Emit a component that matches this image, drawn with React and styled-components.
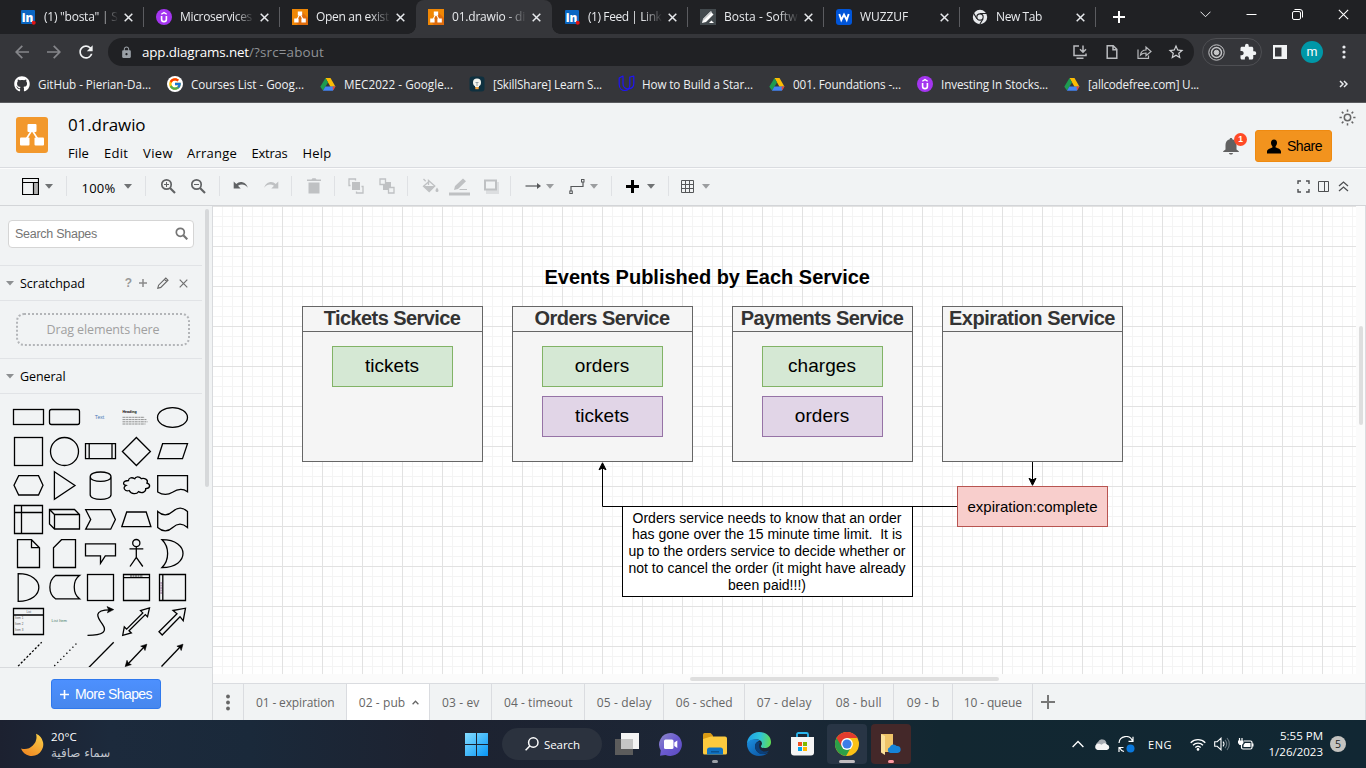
import React, { useLayoutEffect, useRef } from "react";
import styled, { createGlobalStyle, css } from "styled-components";
import { FaGithub } from "react-icons/fa";
import { FcGoogle } from "react-icons/fc";
import { MdExtension, MdLock, MdStarBorder, MdRefresh } from "react-icons/md";

const UI = `"Open Sans", "Noto Sans", "DejaVu Sans", sans-serif`;
const ARIAL = `"Liberation Sans", Arial, sans-serif`;

const Global = createGlobalStyle`
  * { box-sizing: border-box; }
  html, body { margin: 0; overflow: hidden; }
  body { font-family: ${UI}; font-size: 12px; color: #000; }
  svg { display: block; flex: none; }
`;

/* ---------- text that keeps a fixed advance width ---------- */
const FitSpan = styled.span`
  display: inline-block;
  white-space: pre;
  flex: none;
`;
function Fit({ w, children }) {
  const ref = useRef(null);
  useLayoutEffect(() => {
    const el = ref.current;
    el.style.letterSpacing = "0px";
    const natural = el.getBoundingClientRect().width;
    el.style.letterSpacing = `${(w - natural) / el.textContent.length}px`;
  }, [w, children]);
  return <FitSpan ref={ref}>{children}</FitSpan>;
}

const Page = styled.div`
  width: 1366px;
  height: 768px;
  display: flex;
  flex-direction: column;
  overflow: hidden;
`;

/* ---------- browser chrome ---------- */
const TabStrip = styled.div`
  height: 34px;
  background: #202124;
  display: flex;
  padding-left: 8px;
  flex: none;
`;
const BrowserTab = styled.div`
  position: relative;
  width: 136px;
  height: 34px;
  padding-left: 12px;
  display: flex;
  align-items: center;
  color: #e8eaed;
  ${(p) => p.$active && css`
    background: #35363a;
    border-radius: 8px 8px 0 0;
    &::before, &::after {
      content: "";
      position: absolute;
      bottom: 0;
      width: 8px;
      height: 8px;
    }
    &::before { left: -8px; background: radial-gradient(circle at 0 0, #202124 7.5px, #35363a 8px); }
    &::after { right: -8px; background: radial-gradient(circle at 100% 0, #202124 7.5px, #35363a 8px); }
  `}
  ${(p) => p.$divider && css`
    background: linear-gradient(#5b5c60, #5b5c60) right 7px / 1px 20px no-repeat;
  `}
`;
const TabTitle = styled.div`
  width: 74px;
  margin-left: 8px;
  overflow: hidden;
  font-size: 12px;
  line-height: 18px;
  height: 18px;
  flex: none;
  mask-image: linear-gradient(90deg, #000 54px, transparent 75px);
`;
const TabClose = styled.div`
  margin-left: 6px;
  width: 10px;
  flex: none;
`;
const NewTabButton = styled.div`
  width: 46px;
  display: grid;
  place-items: center;
`;
const WindowButtons = styled.div`
  margin-left: auto;
  height: 29px;
  display: grid;
  grid-template-columns: repeat(4, 46px);
  place-items: center;
`;
const AddressRow = styled.div`
  height: 34px;
  background: #35363a;
  display: flex;
  align-items: center;
  padding: 2px 0 0 6px;
  flex: none;
`;
const NavButton = styled.div`
  width: 32px;
  display: grid;
  place-items: center;
  flex: none;
  color: ${(p) => p.$color || "#85868a"};
`;
const Omnibox = styled.div`
  margin-left: 6px;
  width: 1086px;
  height: 28px;
  border-radius: 14px;
  background: #202124;
  display: flex;
  align-items: center;
  padding: 0 2px 0 12px;
  font-size: 13.4px;
  color: #fff;
  flex: none;
`;
const UrlHost = styled.span`margin-left: 9px;`;
const UrlPath = styled.span`color: #8f9296;`;
const OmniActions = styled.div`
  margin-left: auto;
  display: flex;
`;
const ExtensionPill = styled.div`
  margin: 0 2px 0 8px;
  width: 60px;
  height: 28px;
  border: 1px solid #4e4f53;
  border-radius: 14px;
  display: flex;
  align-items: center;
  justify-content: space-between;
  padding: 0 4px 0 5px;
  color: #f1f3f4;
  flex: none;
`;
const Avatar = styled.div`
  width: 22px;
  height: 22px;
  border-radius: 50%;
  background: #0097a7;
  color: #fff;
  font: 12.5px/21px Roboto, sans-serif;
  text-align: center;
`;
const BookmarkBar = styled.div`
  height: 35px;
  background: #35363a;
  border-bottom: 1px solid #5a5b5e;
  display: flex;
  gap: 16px;
  align-items: center;
  padding: 0 18px 3px 14px;
  flex: none;
  color: #eef0f2;
  font-size: 11.7px;
`;
const Bookmark = styled.div`
  display: flex;
  gap: 8px;
  align-items: center;
  height: 18px;
`;
const BookmarkIcon = styled.span`
  width: 16px;
  flex: none;
`;
const BookmarkOverflow = styled.div`
  margin-left: auto;
`;
const GoogleBadge = styled.span`
  width: 16px;
  height: 16px;
  border-radius: 50%;
  background: #fff;
  display: grid;
  place-items: center;
`;

const Close = ({ s = 9, c = "#e8eaed", w = 1.5 }) => (
  <svg width={s} height={s} viewBox="0 0 9 9" stroke={c} strokeWidth={w}><path d="M.7.7l7.6 7.6M8.3.7L.7 8.3" /></svg>
);

const LinkedIn = () => (
  <svg width="16" height="16" viewBox="0 0 16 16">
    <rect x="1" y="1" width="14" height="14" rx="1" fill="#0a66c2" />
    <text x="1.8" y="13" fontFamily="Open Sans" fontWeight="800" fontSize="13" fill="#fff" textLength="11.6" lengthAdjust="spacingAndGlyphs">in</text>
    <circle cx="13.7" cy="13.7" r="2" fill="#e01616" />
  </svg>
);
const Udemy = () => (
  <svg width="16" height="16" viewBox="0 0 16 16">
    <circle cx="8" cy="8" r="8" fill="#a435f0" />
    <path d="M5.6 7v3.200a2.400 2.400 0 0 0 4.800 0V7" fill="none" stroke="#fff" strokeWidth="1.600" />
    <path d="M5.300 5.200L8 3.600l2.700 1.600" fill="none" stroke="#fff" strokeWidth="1.300" />
  </svg>
);
const DrawioIcon = () => (
  <svg width="16" height="16" viewBox="0 0 16 16">
    <rect width="16" height="16" fill="#f08705" />
    <path d="M10 3l6 6v7H6l-3-3z" fill="#df6c0c" />
    <path d="M8 5L4.6 11M8 5l3.400 6" stroke="#fff" strokeWidth="1.100" />
    <path d="M5.800 2.600h4.400v3.800H5.800zM2.200 9.600h4.400v3.800H2.200zM9.400 9.600h4.400v3.800H9.400z" fill="#fff" />
  </svg>
);
const PenIcon = () => (
  <svg width="16" height="16" viewBox="0 0 16 16">
    <rect width="16" height="16" fill="#434a4e" />
    <path d="M2 14l1-4 7.500-7.500 3 3L6 13z" fill="#fff" /><path d="M3 10l8-8 1 1.200L3 12z" fill="#c9cccd" />
    <path d="M9 14l2.400-2.400L14 14z" fill="#fff" />
  </svg>
);
const Wuzzuf = () => (
  <svg width="16" height="16" viewBox="0 0 16 16">
    <rect width="16" height="16" rx="3" fill="#0055d9" />
    <path d="M3.300 5l2 6L8 5.600 10.700 11l2-6" fill="none" stroke="#fff" strokeWidth="1.900" />
  </svg>
);
const ChromeGrey = () => (
  <svg width="16" height="16" viewBox="0 0 16 16">
    <circle cx="8" cy="8" r="7.200" fill="#e8eaed" />
    <circle cx="8" cy="8" r="3.700" fill="#202124" /><circle cx="8" cy="8" r="2.600" fill="#e8eaed" />
    <path d="M8 4.500h7M4.900 9.700L1.400 3.900M11.100 9.700L7.800 15.200" stroke="#202124" strokeWidth="1.100" />
  </svg>
);
const Drive = () => (
  <svg width="16" height="16" viewBox="0 0 16 16">
    <path d="M5.500 2h5L15.500 10.700h-5z" fill="#fbbc04" />
    <path d="M5.500 2L8 6.500 3 14.500.3 10.700z" fill="#1e9b50" />
    <path d="M5.400 10.600H15.300L12.800 14.700H2.900z" fill="#4385f5" />
    <path d="M12.600 10.600h2.900l-2.500 4z" fill="#ea4335" />
  </svg>
);
const Skill = () => (
  <svg width="16" height="16" viewBox="0 0 16 16">
    <rect x=".5" y=".5" width="15" height="15" rx="3" fill="#0f303f" />
    <circle cx="8" cy="6.500" r="4" fill="#f4f4ee" /><path d="M6 9h4v2H6z" fill="#f4f4ee" />
    <path d="M6.300 11h3.400v2.200H6.300z" fill="#f5a742" />
    <path d="M6.500 6.500h3M8 6.500V10" stroke="#7e8d94" strokeWidth=".8" />
  </svg>
);
const Udacity = () => (
  <svg width="17" height="17" viewBox="0 0 17 17" fill="none" stroke="#2014f5" strokeWidth="1.200" strokeLinejoin="round">
    <path d="M5 1L1.200 3v6.500c0 4 2.800 6 5.500 6 1.600 0 3-.6 3.800-1.700-3 .3-5.500-1.300-5.500-4.800z" />
    <path d="M15.800 1.200L11.800 2v8.300c0 1.500-.4 2.600-1.300 3.500 3-.2 5.300-2 5.300-5.300z" />
  </svg>
);

const tabs = [
  { icon: <LinkedIn />, t: '(1) "bosta" | S', w: 73.5, divider: true },
  { icon: <Udemy />, t: "Microservices", w: 72, divider: true },
  { icon: <DrawioIcon />, t: "Open an exist", w: 73 },
  { icon: <DrawioIcon />, t: "01.drawio - di", w: 73, active: true },
  { icon: <LinkedIn />, t: "(1) Feed | Link", w: 73.5, divider: true },
  { icon: <PenIcon />, t: "Bosta - Softw", w: 73.5, divider: true },
  { icon: <Wuzzuf />, t: "WUZZUF", w: 48, divider: true },
  { icon: <ChromeGrey />, t: "New Tab", w: 46, divider: true },
];
const bookmarks = [
  [<FaGithub size={16} color="#fff" />, "GitHub - Pierian-Da...", 113],
  [<GoogleBadge><FcGoogle size={14} /></GoogleBadge>, "Courses List - Goog...", 113],
  [<Drive />, "MEC2022 - Google...", 109],
  [<Skill />, "[SkillShare] Learn S...", 109],
  [<Udacity />, "How to Build a Star...", 111],
  [<Drive />, "001. Foundations -...", 108],
  [<Udemy />, "Investing In Stocks...", 107],
  [<Drive />, "[allcodefree.com] U...", 111],
];

const OI = ({ children }) => (
  <svg width="16" height="16" viewBox="0 0 16 16" fill="none" stroke="#b9bbbe" strokeWidth="1.500">{children}</svg>
);

function Browser() {
  return (
    <>
      <TabStrip>
        {tabs.map((t) => (
          <BrowserTab key={t.t} $active={t.active} $divider={t.divider}>
            {t.icon}
            <TabTitle><Fit w={t.w}>{t.t}</Fit></TabTitle>
            <TabClose><Close /></TabClose>
          </BrowserTab>
        ))}
        <NewTabButton>
          <svg width="12" height="12" viewBox="0 0 12 12" stroke="#fff" strokeWidth="2"><path d="M6 0v12M0 6h12" /></svg>
        </NewTabButton>
        <WindowButtons>
          <svg width="11" height="7" viewBox="0 0 11 7" fill="none" stroke="#e8eaed"><path d="M.5.7l5 5 5-5" /></svg>
          <svg width="11" height="3" viewBox="0 0 11 3" stroke="#fff"><path d="M.5 1.500h10" /></svg>
          <svg width="11" height="11" viewBox="0 0 11 11" fill="none" stroke="#fff"><rect x=".5" y="2.500" width="8" height="8" rx="1.500" /><path d="M2.500.5h5.500a2.500 2.500 0 0 1 2.500 2.500v5.500" /></svg>
          <Close s={11} c="#fff" w={0.9} />
        </WindowButtons>
      </TabStrip>
      <AddressRow>
        <NavButton><svg width="14" height="14" viewBox="0 0 14 14" fill="none" stroke="currentColor" strokeWidth="1.700"><path d="M14 7H1.500M7.300.8L1.200 7l6.100 6.200" /></svg></NavButton>
        <NavButton><svg width="14" height="14" viewBox="0 0 14 14" fill="none" stroke="currentColor" strokeWidth="1.700"><path d="M0 7h12.500M6.700.8L12.800 7l-6.100 6.200" /></svg></NavButton>
        <NavButton $color="#f1f3f4"><MdRefresh size={20} /></NavButton>
        <Omnibox>
          <MdLock size={13} color="#9aa0a6" />
          <UrlHost><Fit w={107}>app.diagrams.net</Fit></UrlHost>
          <UrlPath><Fit w={75}>/?src=about</Fit></UrlPath>
          <OmniActions>
            <NavButton><OI><path d="M7 2H2v9.500h12V9.500M4.500 14.200h7M11 1.500v6M8 5.300l3 3 3-3" /></OI></NavButton>
            <NavButton><OI><path d="M3.200 1.700h6l3.600 3.600v9H3.200zM9 2v3.800h3.500" /></OI></NavButton>
            <NavButton><OI><path d="M2 5.500v8.800h10.500V11.500M4.500 11c.5-3.500 2.500-5 5.500-5V3l5 4.500-5 4.200V9c-2.500 0-4 .5-5.500 2z" strokeWidth="1.200" /></OI></NavButton>
            <NavButton $color="#d0d2d5"><MdStarBorder size={18} /></NavButton>
          </OmniActions>
        </Omnibox>
        <ExtensionPill>
          <svg width="17" height="17" viewBox="0 0 17 17" fill="none" stroke="#c6c7c9"><circle cx="8.500" cy="8.500" r="7.700" /><circle cx="8.500" cy="8.500" r="5" strokeWidth="1.400" /><circle cx="8.500" cy="8.500" r="2.300" fill="#c6c7c9" /></svg>
          <MdExtension size={18} />
        </ExtensionPill>
        <NavButton><svg width="14" height="14" viewBox="0 0 14 14"><path fillRule="evenodd" fill="#f1f3f4" d="M0 0h14v14H0zM2 2.500v9h6.500v-9z" /></svg></NavButton>
        <NavButton><Avatar>m</Avatar></NavButton>
        <NavButton><svg width="4" height="14" viewBox="0 0 4 14" fill="#e8eaed"><circle cx="2" cy="2" r="1.600" /><circle cx="2" cy="7" r="1.600" /><circle cx="2" cy="12" r="1.600" /></svg></NavButton>
      </AddressRow>
      <BookmarkBar>
        {bookmarks.map(([icon, t, w]) => (
          <Bookmark key={t}><BookmarkIcon>{icon}</BookmarkIcon><Fit w={w}>{t}</Fit></Bookmark>
        ))}
        <BookmarkOverflow><svg width="9" height="8" viewBox="0 0 9 8" fill="none" stroke="#e8eaed" strokeWidth="1.500"><path d="M1 1l3 3-3 3M5 1l3 3-3 3" /></svg></BookmarkOverflow>
      </BookmarkBar>
    </>
  );
}

/* ---------- editor header ---------- */
const Header = styled.div`
  height: 65px;
  background: #f1f3f4;
  border-bottom: 1px solid #dadce0;
  display: flex;
  padding-left: 16px;
  flex: none;
`;
const Logo = styled.div`
  width: 32px;
  height: 36px;
  margin-top: 14px;
  border-radius: 3px;
  background: #f2982c;
  display: grid;
  place-items: center;
`;
const TitleBlock = styled.div`
  margin-left: 20px;
`;
const FileName = styled.div`
  margin-top: 9px;
  font-size: 17px;
  line-height: 26px;
  height: 26px;
`;
const MenuBar = styled.div`
  display: flex;
  margin-top: 5px;
  font-size: 13px;
  line-height: 20px;
`;
const MenuItem = styled.div`
  margin-right: ${(p) => p.$gap}px;
`;
const HeaderActions = styled.div`
  margin-left: auto;
  display: flex;
  width: 143px;
`;
const Bell = styled.div`
  position: relative;
  width: 32px;
  padding: 34px 0 0 0;
`;
const BellCount = styled.span`
  position: absolute;
  left: 11px;
  top: 30px;
  width: 13px;
  height: 13px;
  border-radius: 50%;
  background: #ff4a26;
  color: #fff;
  font: bold 8.5px/13px ${ARIAL};
  text-align: center;
`;
const ShareButton = styled.div`
  margin-top: 27px;
  width: 77px;
  height: 32px;
  border: 1px solid #ef8a10;
  border-radius: 3px;
  background: #f2931e;
  display: flex;
  align-items: center;
  gap: 6px;
  padding-left: 11px;
  font: 14px ${ARIAL};
`;
const SunSlot = styled.div`
  padding: 6px 0 0 7px;
`;

const menus = [["File", 21, 15], ["Edit", 24, 15], ["View", 30, 14], ["Arrange", 50, 14.5], ["Extras", 36, 15], ["Help", 29, 0]];

function EditorHeader() {
  return (
    <Header>
      <Logo>
        <svg width="24" height="22" viewBox="0 0 24 22" fill="#fff"><path d="M12 6L5 17M12 6l7 11" stroke="#fff" strokeWidth="1.600" /><rect x="7.500" y="0" width="9" height="8" rx="1" /><rect x="0" y="13.500" width="9.500" height="8" rx="1" /><rect x="14.500" y="13.500" width="9.500" height="8" rx="1" /></svg>
      </Logo>
      <TitleBlock>
        <FileName><Fit w={77.5}>01.drawio</Fit></FileName>
        <MenuBar>{menus.map(([m, w, g]) => <MenuItem key={m} $gap={g}><Fit w={w}>{m}</Fit></MenuItem>)}</MenuBar>
      </TitleBlock>
      <HeaderActions>
        <Bell>
          <svg width="17" height="18" viewBox="0 0 17 18" fill="#616161"><path d="M8 1c.9 0 1.300.5 1.300 1.300 2.700.7 4.200 2.700 4.200 5.700v4.500l2.300 1.700v.8H.2v-.8l2.300-1.700V8c0-3 1.500-5 4.200-5.700C6.700 1.500 7.100 1 8 1zM6 16h4c-.2 1-1 1.600-2 1.600S6.200 17 6 16z" /></svg>
          <BellCount>1</BellCount>
        </Bell>
        <ShareButton>
          <svg width="14" height="15" viewBox="0 0 14 15"><path d="M7 .5c2 0 3 1.400 3 3.200 0 1.500-.6 2.800-1.400 3.500v1.300c2.800.9 5.400 1.700 5.400 4.300V14.500H0v-1.700c0-2.600 2.600-3.400 5.400-4.300V7.200C4.600 6.500 4 5.200 4 3.700 4 1.900 5 .5 7 .5z" /></svg>
          <Fit w={35}>Share</Fit>
        </ShareButton>
        <SunSlot>
          <svg width="17" height="17" viewBox="0 0 17 17" fill="none" stroke="#666" strokeWidth="1.500"><circle cx="8.500" cy="8.500" r="3.200" /><path d="M8.500.5v2.300M8.500 14.200v2.300M.5 8.500h2.300M14.200 8.500h2.300M2.800 2.800l1.600 1.600M12.600 12.600l1.600 1.600M2.800 14.200l1.600-1.600M12.600 4.400l1.600-1.600" /></svg>
        </SunSlot>
      </HeaderActions>
    </Header>
  );
}

/* ---------- editor toolbar ---------- */
const ToolRow = styled.div`
  height: 38px;
  background: #f1f3f4;
  border-top: 1px solid #fcfcfc;
  border-bottom: 1px solid #d3d5d8;
  display: flex;
  align-items: center;
  padding: 0 0 2px 18px;
  flex: none;
`;
const Slot = styled.div`
  width: ${(p) => p.$w}px;
  margin-left: ${(p) => p.$ml || 0}px;
  display: flex;
  justify-content: center;
  flex: none;
`;
const SepLine = styled.div`width: 1px; height: 20px; background: #dfe1e4;`;
const Zoom = styled.div`
  font-size: 13px;
  line-height: 18px;
  padding-top: 3px;
`;
const RightTools = styled.div`
  margin-left: auto;
  padding-right: 13px;
  display: flex;
  align-items: center;
`;
const Sep = ({ w }) => <Slot $w={w}><SepLine /></Slot>;
const Caret = ({ w, c = "#707274" }) => <Slot $w={w}><svg width="8" height="5" viewBox="0 0 8 5"><path d="M0 0h8L4 4.700z" fill={c} /></svg></Slot>;
const T = ({ w, ml, children, sw = 16, sh = 16, ...r }) => (
  <Slot $w={w} $ml={ml}><svg width={sw} height={sh} viewBox={`0 0 ${sw} ${sh}`} fill="none" {...r}>{children}</svg></Slot>
);

function ToolBar() {
  const light = "#bfc1c3";
  return (
    <ToolRow>
      <T w={25} sw={17} sh={17} stroke="#000"><rect x="11" y="4" width="5" height="12" fill="#b3b3b3" stroke="none" /><path d="M.5.5h16v16H.5zM.5 4.500h16M11.500 4.500v12" strokeWidth="1.200" /></T>
      <Caret w={12} /><Sep w={23} />
      <Slot $w={41}><Zoom><Fit w={34}>100%</Fit></Zoom></Slot><Caret w={18} /><Sep w={17} />
      <T w={28} stroke="#606264" strokeWidth="1.700"><circle cx="6.500" cy="6.500" r="4.700" /><path d="M10 10l5 5" strokeWidth="2.100" /><path d="M6.500 4v5M4 6.500h5" strokeWidth="1" /></T>
      <T w={32} stroke="#606264" strokeWidth="1.700"><circle cx="6.500" cy="6.500" r="4.700" /><path d="M10 10l5 5" strokeWidth="2.100" /><path d="M4 6.500h5" strokeWidth="1" /></T>
      <Sep w={10} />
      <T w={34} fill="#606264"><path d="M.7 3.500v7h7L5 7.800C8.200 5.500 12 6 14.800 9.700c-1.600-5.600-8-7.600-11.500-3.600z" /></T>
      <T w={26} fill={light}><path d="M15.300 3.500v7h-7L11 7.800C7.800 5.500 4 6 1.200 9.700 2.800 4.100 9.200 2.100 12.700 6.100z" /></T>
      <Sep w={14} />
      <T w={32} fill={light}><path d="M1 1.500h4.500l1-1.200h3l1 1.200H15V3H1zM2.500 4.500h11v11h-11z" /></T>
      <Sep w={9} />
      <T w={34} stroke={light} strokeWidth="1.300"><rect x="4" y="4" width="8" height="8" fill={light} stroke="none" /><path d="M2.500 7.500H1V1h6.500v1.500M13.500 8.500H15V15H8.500v-1.500" /></T>
      <T w={28} stroke={light} strokeWidth="1.300"><path d="M4 4h8v8H4z" fill={light} stroke="none" /><path d="M1 1h5.500v5.500H1zM9.500 9.500H15V15H9.500z" fill="#f1f3f4" /></T>
      <Sep w={12} />
      <Slot $w={34}><svg width="17" height="17" viewBox="0 0 17 17" fill={light}><path d="M1.500 1l2.200 2.200M6.500 7V2.500L12.800 8l-5.600 5.600-5.700-5.300L7 3.500" stroke={light} fill="none" strokeWidth="1.300" /><path d="M1.500 8h11l-5.300 5.500zM15 9.500c1 1.500 1.500 2.200 1.500 3a1.500 1.500 0 0 1-3 0c0-.8.5-1.500 1.500-3z" /></svg></Slot>
      <T w={25} sw={21} sh={19} fill={light}><path d="M5 13l1-4L14 1.500l3 2.700L9 12zM0 15.500h21V18.500H0zM11 12h7v1H10z" /></T>
      <T ml={8} w={21} stroke={light}><path d="M3 4h13v12H3z" fill="#dcdee0" stroke="none" /><rect x="2" y="2.500" width="11" height="9" fill="#f1f3f4" strokeWidth="2" /></T>
      <Sep w={19} />
      <T w={25} stroke="#555759"><path d="M.5 8h13" strokeWidth="1.200" /><path d="M12 5l4 3-4 3z" fill="#555759" stroke="none" /></T>
      <Caret w={10} c="#9b9d9f" />
      <T ml={9} w={25} stroke="#555759"><path d="M2 13V8.500h12V4" strokeWidth="1.200" /><rect x="12.500" y="1.500" width="2.500" height="2.500" /><rect x=".8" y="13" width="2.500" height="2.500" /></T>
      <Caret w={10} c="#9b9d9f" /><Sep w={25} />
      <T w={17} sw={13} sh={13} stroke="#000" strokeWidth="3"><path d="M6.500 0v13M0 6.500h13" /></T>
      <Caret w={20} /><Sep w={15} />
      <T w={23} sw={13} sh={13} stroke="#555759"><path d="M.5.5h12v12H.5zM.5 4.500h12M.5 8.500h12M4.500.5v12M8.500.5v12" /></T>
      <Caret w={14} c="#9b9d9f" />
      <RightTools>
        <T w={20} sw={13} sh={13} stroke="#4d4f51" strokeWidth="1.400"><path d="M1 4V1h3M9 1h3v3M12 9v3H9M4 12H1V9" /></T>
        <T w={20} sw={11} sh={11} stroke="#4d4f51"><path d="M.5.5h10v10H.5zM6.500.5v10" /></T>
        <T w={20} sw={11} sh={11} stroke="#4d4f51" strokeWidth="1.300"><path d="M1 5l4.500-4L10 5M1 10l4.500-4L10 10" /></T>
      </RightTools>
    </ToolRow>
  );
}

/* ---------- sidebar ---------- */
const Workspace = styled.div`
  display: flex;
  height: 514px;
  flex: none;
`;
const Sidebar = styled.div`
  width: 213px;
  background: #f1f3f4;
  border-right: 1px solid #d8dadd;
  display: flex;
  flex-direction: column;
`;
const SideScroll = styled.div`
  height: 461px;
  overflow: hidden;
  display: flex;
`;
const SideContent = styled.div`
  width: 202px;
`;
const ScrollThumb = styled.div`
  width: 4px;
  height: 278px;
  margin: 3px 0 0 3px;
  border-radius: 2px;
  background: #d6d8da;
`;
const SearchBox = styled.div`
  margin: 14px 8px 17px;
  width: 186px;
  height: 28px;
  border: 1px solid #d5d5d5;
  border-radius: 4px;
  background: #fff;
  display: flex;
  align-items: center;
  justify-content: space-between;
  padding: 0 5px 1px 6px;
  font: 12.5px ${ARIAL};
  color: #757575;
`;
const Section = styled.div`
  height: ${(p) => p.$h}px;
  border-top: 1px solid #e1e3e6;
  display: flex;
  align-items: center;
  padding-left: 6px;
  font-size: 12.5px;
  font-weight: 500;
`;
const SectionLabel = styled.div`margin-left: 6px; flex: 1; display: flex;`;
const SectionTools = styled.div`
  display: flex;
  gap: 10px;
  align-items: center;
  padding-right: 14px;
  color: #999;
  font: bold 12px ${ARIAL};
`;
const HelpMark = styled.span`margin-right: -3px;`;
const DropArea = styled.div`
  height: 58px;
  border-top: 1px solid #e1e3e6;
  padding: 12px 0 0 16px;
`;
const DropHint = styled.div`
  width: 174px;
  height: 33px;
  border: 2px dotted #b3b5b8;
  border-radius: 8px;
  display: grid;
  place-items: center;
  color: #a0a0a0;
  font-size: 12.5px;
`;
const ShapeGrid = styled.div`
  border-top: 1px solid #e1e3e6;
  padding: 6px 0 0 10px;
  display: grid;
  grid-template-columns: repeat(5, 36px);
  grid-auto-rows: 34px;
`;
const SideFooter = styled.div`
  height: 53px;
  border-top: 1px solid #d8dadd;
  padding: 11px 0 0 51px;
`;
const MoreButton = styled.div`
  width: 110px;
  height: 30px;
  border: 1px solid #3079ed;
  border-radius: 3px;
  background: linear-gradient(#4d90fe, #4787ed);
  color: #fff;
  font: 14px ${ARIAL};
  display: flex;
  align-items: center;
  gap: 6px;
  padding-left: 8px;
`;

const Tiny = ({ x, y, s = 3, c = "#555", b, children }) => (
  <text x={x} y={y} fontSize={s} fill={c} fontWeight={b ? 700 : 400} fontFamily="Liberation Sans">{children}</text>
);
const F = { fill: "#000", strokeWidth: 0.6 };
const shapes = [
  <rect x="3.500" y="9.500" width="30" height="15" />,
  <rect x="3.500" y="9.500" width="30" height="15" rx="2" />,
  <g stroke="none"><Tiny x={12.8} y={18.900} s={5.2} c="#4a78b5">Text</Tiny></g>,
  <g stroke="none"><Tiny x={4.500} y={13.200} s={3.600} c="#000" b>Heading</Tiny><path d="M4.500 17.300h22M4.500 19.600h24M4.500 21.800h25M4.500 24h23" stroke="#777" strokeWidth=".8" strokeDasharray="3 .6 2 .5" /></g>,
  <ellipse cx="18.500" cy="17.500" rx="15" ry="9.800" />,
  <rect x="4.500" y="3.500" width="28" height="28" />,
  <circle cx="18.500" cy="17.500" r="14" />,
  <path d="M3.500 9.700h30v15h-30zM7.200 9.700v15M30 9.700v15" />,
  <path d="M18.400 3.500l14 14-14 14-14-14z" />,
  <path d="M8.600 9.700h24.900l-5 15H3.800z" />,
  <path d="M8.700 7.700h19.800L33 17.300 28.500 27H8.700L4 17.300z" />,
  <path d="M8.400 3.700L29 17.500 8.400 31.300z" />,
  <path d="M8.200 8.700v18c0 6.300 20.800 6.300 20.800 0v-18c0-6.300-20.800-6.300-20.800 0 0 6.300 20.800 6.300 20.800 0" />,
  <path d="M10.500 12.500C5 12.500 4 16.500 8 17.500c-4 2-1 6.300 3.200 5 2 4 7.600 4 9.200 1.200 4 2 7.800 0 7.300-3 5-.5 5-4.500 1.200-5.500 2-4-3-5.500-5.600-4.500-2-2.800-5.800-2.300-6.600 0-3.400-2-6.200-.5-6.200 1.800z" />,
  <path d="M3.700 7.700h29.800v16c-5-3.500-10-2.700-15 .6-5 3-10 2.700-14.800-.3z" />,
  <path d="M4.500 3.500h28v28h-28zM11.500 3.500v28M4.500 10.500h28" />,
  <path d="M3.500 7.500h25l5 5V27H8.500l-5-5zM3.500 7.500l5 5h25M8.500 12.500V27" />,
  <path d="M3.700 7.700h25l4.700 9.800-4.700 9.700h-25l5-9.700z" />,
  <path d="M8.700 10h19.500l4.700 14.700H3.800z" />,
  <path d="M3.700 9.500c5 4.500 10 4.500 15 0s10-4.500 14.800 0v16c-5-4.500-10-4.500-14.800 0s-10 4.500-15 0z" />,
  <path d="M7.500 3.700h14l8 8v19.800h-22zM21.500 3.700v8h8" />,
  <path d="M15.500 3.700h14v27.800h-22V11.700z" />,
  <path d="M3.500 7.800h30v12H23.300l-4.800 7.500v-7.500h-15z" />,
  <path d="M11.500 12.800h13.800M18.300 10.700v10.600M18.300 21.300L12 30.500M18.300 21.300l6.500 9.200M18.300 3.500a3.600 3.600 0 1 1 0 7.200 3.600 3.600 0 0 1 0-7.200z" />,
  <path d="M8 3.700c28 0 28 27.800 0 27.800 7.500-7 7.500-20.800 0-27.800z" />,
  <path d="M8.200 3.700c27.500 0 27.500 27.600 0 27.600z" />,
  <path d="M9.500 5.500h24c-7 5-7 18 0 23.300h-24c-7.500-5-7.500-18 0-23.300z" />,
  <rect x="5.500" y="4.500" width="26" height="26" />,
  <g><path d="M5.500 4.500h26v26h-26zM5.500 7.700h26" /><path d="M12 6h13" strokeWidth=".8" strokeDasharray="2 .5" /></g>,
  <g><path d="M5.500 4.500h26v26h-26zM8.800 4.500v26" /><path d="M7.100 12v12" stroke="#747" strokeWidth=".8" strokeDasharray="2 .5" /></g>,
  <g><path d="M3.500 4.500h30v26h-30zM3.500 11h30" /><g stroke="none"><Tiny x={16.500} y={8.500} c="#456">List</Tiny><Tiny x={5} y={15}>Item 1</Tiny><Tiny x={5} y={21}>Item 2</Tiny><Tiny x={5} y={27}>Item 3</Tiny></g></g>,
  <g stroke="none"><Tiny x={5.500} y={18} s={4.1} c="#4b7a68">List Item</Tiny></g>,
  <g><path d="M5.500 31.300c16 0 20-4 15-11C15 13 11 6 28 5.800" /><path d="M25 2.600l6.700 3-6.300 3.200 1.300-3z" {...F} /></g>,
  <path d="M4.700 31.300l1.600-8.500 2.300 2.300L24.800 8.900l-2.300-2.300 9-2.600-2 8.800-2.200-2.200L11 26.800l2.300 2.200z" />,
  <path d="M5 27.800L23 9.800l-4-3.300 12.500-2.300-2.300 12.500-3.200-4L8.200 31z" />,
  <path d="M5.300 31L31.700 4.200" strokeDasharray="2.200 1.800" />,
  <path d="M5.300 31L31 5" strokeDasharray="1.300 3" />,
  <path d="M5.300 31L31.700 4.200" />,
  <g><path d="M9 27L27 8" /><path d="M28.800 6.200l-1.800 6.300-1.300-3-3-1.300zM7.200 28.600l1.800-6.300 1.300 3 3 1.300z" {...F} /></g>,
  <g><path d="M7.500 28.500L27 8" /><path d="M29 6.200l-1.800 6.300-1.300-3-3-1.300z" {...F} /></g>,
];

const Fold = () => <svg width="8" height="5" viewBox="0 0 8 5"><path d="M0 0h8L4 4.500z" fill="#8d8f91" /></svg>;

function ShapePanel() {
  return (
    <Sidebar>
      <SideScroll>
        <SideContent>
          <SearchBox>
            <Fit w={82}>Search Shapes</Fit>
            <svg width="13" height="13" viewBox="0 0 13 13" fill="none" stroke="#757575"><circle cx="5.300" cy="5.300" r="4" strokeWidth="1.700" /><path d="M8.300 8.300l4 4" strokeWidth="2.200" /></svg>
          </SearchBox>
          <Section $h={35}>
            <Fold /><SectionLabel><Fit w={65}>Scratchpad</Fit></SectionLabel>
            <SectionTools>
              <HelpMark>?</HelpMark>
              <svg width="8" height="8" viewBox="0 0 8 8" stroke="#8a8a8a" strokeWidth="1.500"><path d="M4 0v8M0 4h8" /></svg>
              <svg width="12" height="12" viewBox="0 0 12 12" fill="none" stroke="#666" strokeWidth="1.100"><path d="M.8 11.200l.8-3L8.800 1l2.200 2.200-7.200 7.200zM7.500 2.300l2.200 2.200" /></svg>
              <Close s={9} c="#707070" w={1.2} />
            </SectionTools>
          </Section>
          <DropArea><DropHint><Fit w={113}>Drag elements here</Fit></DropHint></DropArea>
          <Section $h={35}><Fold /><SectionLabel><Fit w={45.5}>General</Fit></SectionLabel></Section>
          <ShapeGrid>
            {shapes.map((s, i) => <svg key={i} width="36" height="34" viewBox="0 0 36 34" fill="none" stroke="#000" strokeWidth="1.300">{s}</svg>)}
          </ShapeGrid>
        </SideContent>
        <ScrollThumb />
      </SideScroll>
      <SideFooter>
        <MoreButton>
          <svg width="9" height="9" viewBox="0 0 9 9" stroke="#fff" strokeWidth="1.600"><path d="M4.500 0v9M0 4.500h9" /></svg>
          <Fit w={77}>More Shapes</Fit>
        </MoreButton>
      </SideFooter>
    </Sidebar>
  );
}

/* ---------- canvas ---------- */
const Main = styled.div`
  width: 1153px;
  display: flex;
  flex-direction: column;
`;
const CanvasFrame = styled.div`
  position: relative;
  height: 477px;
  background: #fbfbfb;
  border-right: 1px solid #dadce0;
  overflow: hidden;
`;
const grid = (c, s, x) => `linear-gradient(90deg, ${c} 1px, transparent 1px) ${x}px 0 / ${s}px ${s}px, linear-gradient(${c} 1px, transparent 1px) 0 0 / ${s}px ${s}px`;
const Canvas = styled.div`
  position: relative;
  width: 1143px;
  height: 468px;
  background: ${grid("#e2e2e2", 40, 29)}, ${grid("#f4f4f4", 10, 9)}, #fff;
  font-family: ${ARIAL};
`;
const Node = styled.div`
  position: absolute;
  left: ${(p) => p.$x - 213}px;
  top: ${(p) => p.$y - 206}px;
  width: ${(p) => p.$w}px;
  height: ${(p) => p.$h}px;
  border: 1px solid ${(p) => p.$stroke};
  background: ${(p) => p.$fill};
  font-size: ${(p) => p.$size || 19}px;
  display: flex;
  align-items: center;
  justify-content: center;
`;
const Topic = styled(Node)`
  padding: 0 1px 2px 0;
`;
const Swimlane = styled(Node)`
  align-items: flex-start;
`;
const LaneTitle = styled.div`
  width: 100%;
  height: 25px;
  padding-right: 1px;
  border-bottom: 1px solid #666;
  color: #333;
  font: bold 20px/23px ${ARIAL};
  text-align: center;
`;
const DiagramTitle = styled.div`
  position: absolute;
  left: 331.5px;
  top: 59px;
  font-weight: bold;
  font-size: 20px;
  line-height: 24px;
`;
const Note = styled(Node)`
  flex-direction: column;
  line-height: 16.8px;
  padding-right: 1px;
`;
const Edges = styled.svg`
  position: absolute;
  inset: 0;
`;
const VThumb = styled.div`
  position: absolute;
  right: 2px;
  top: 120px;
  width: 4px;
  height: 99px;
  border-radius: 2px;
  background: #dedede;
`;
const HThumb = styled.div`
  position: absolute;
  left: 477px;
  bottom: 2px;
  width: 309px;
  height: 4px;
  border-radius: 2px;
  background: #dedede;
`;
const lanes = [[302, "Tickets Service", 136.5], [512, "Orders Service", 135], [732, "Payments Service", 162.5], [942, "Expiration Service", 166]];
const green = { $fill: "#d5e8d4", $stroke: "#82b366", $y: 346 };
const purple = { $fill: "#e1d5e7", $stroke: "#9673a6", $y: 396 };
const topics = [
  [332, green, "tickets", 54], [542, green, "orders", 54.5], [542, purple, "tickets", 54],
  [762, green, "charges", 68], [762, purple, "orders", 54.5],
];
const noteLines = [["Orders service needs to know that an order", 269], ["has gone over the 15 minute time limit.  It is", 270], ["up to the orders service to decide whether or", 277], ["not to cancel the order (it might have already", 277], ["been paid!!!)", 78]];

/* ---------- page tabs ---------- */
const PageTabs = styled.div`
  height: 37px;
  background: #f1f3f4;
  border-top: 1px solid #dadce0;
  border-right: 1px solid #dadce0;
  display: flex;
  color: #666;
  font-size: 12px;
`;
const PageMenu = styled.div`
  width: 31px;
  border-right: 1px solid #dadce0;
  display: grid;
  place-items: center;
`;
const PageTab = styled.div`
  width: ${(p) => p.$w}px;
  border-right: 1px solid #dadce0;
  background: ${(p) => (p.$active ? "#fff" : "transparent")};
  display: flex;
  align-items: center;
  justify-content: center;
  gap: 7px;
  padding-left: ${(p) => (p.$active ? 2 : 0.5)}px;
  flex: none;
`;
const AddPage = styled.div`
  width: 30px;
  display: grid;
  place-items: center;
`;
const pages = [["01 - expiration", 103, 78.5], ["02 - pub", 83, 46.5, true], ["03 - ev", 62, 37.5], ["04 - timeout", 93, 68.5], ["05 - delay", 79, 55], ["06 - sched", 81, 57], ["07 - delay", 79, 55], ["08 - bull", 70, 46], ["09 - b", 59, 33], ["10 - queue", 80, 58]];

function Editor() {
  return (
    <Main>
      <CanvasFrame>
        <Canvas>
          <DiagramTitle><Fit w={325.5}>Events Published by Each Service</Fit></DiagramTitle>
          {lanes.map(([x, t, w]) => (
            <Swimlane key={t} $x={x} $y={306} $w={181} $h={156} $fill="#f5f5f5" $stroke="#666">
              <LaneTitle><Fit w={w}>{t}</Fit></LaneTitle>
            </Swimlane>
          ))}
          {topics.map(([x, look, t, w], i) => (
            <Topic key={i} $x={x} $w={121} $h={41} {...look}><Fit w={w}>{t}</Fit></Topic>
          ))}
          <Node $x={957} $y={486} $w={151} $h={41} $fill="#f8cecc" $stroke="#b85450" $size={15}><Fit w={130}>expiration:complete</Fit></Node>
          <Note $x={622} $y={506} $w={291} $h={91} $fill="#fff" $stroke="#000" $size={14}>
            {noteLines.map(([t, w]) => <Fit key={t} w={w}>{t}</Fit>)}
          </Note>
          <Edges width="1143" height="468" viewBox="213 206 1143 468" fill="none" stroke="#000">
            <path d="M957 506.500H602.500V466M1032.500 462v20" />
            <path d="M602.500 462.800l3.500 7-3.500-1.700-3.500 1.700zM1032.500 485.300l3.500-7-3.500 1.700-3.500-1.700z" fill="#000" />
          </Edges>
        </Canvas>
        <VThumb />
        <HThumb />
      </CanvasFrame>
      <PageTabs>
        <PageMenu><svg width="4" height="17" viewBox="0 0 4 17" fill="#666"><circle cx="2" cy="2.500" r="1.900" /><circle cx="2" cy="8.500" r="1.900" /><circle cx="2" cy="14.500" r="1.900" /></svg></PageMenu>
        {pages.map(([t, w, tw, active]) => (
          <PageTab key={t} $w={w} $active={active}>
            <Fit w={tw}>{t}</Fit>
            {active && <svg width="7" height="5" viewBox="0 0 7 5" fill="none" stroke="#666" strokeWidth="1.300"><path d="M.6 4.200l2.900-3 2.900 3" /></svg>}
          </PageTab>
        ))}
        <AddPage><svg width="14" height="14" viewBox="0 0 14 14" stroke="#777" strokeWidth="2"><path d="M7 0v14M0 7h14" /></svg></AddPage>
      </PageTabs>
    </Main>
  );
}

/* ---------- taskbar ---------- */
const Taskbar = styled.div`
  height: 48px;
  flex: none;
  background: linear-gradient(90deg, #1c2130 0, #1c2a3c 110px, #1a293a 250px, #1d2230 440px, #1c2737 760px, #122731 940px, #112733 1366px);
  display: flex;
  color: #fff;
`;
const Weather = styled.div`
  width: 457px;
  padding: 1px 0 0 21px;
  display: flex;
  align-items: center;
  gap: 7px;
`;
const WeatherText = styled.div`
  font-size: 11.5px;
  line-height: 16px;
  display: flex;
  flex-direction: column;
  align-items: flex-start;
`;
const WeatherState = styled.div`
  color: #c3c7cf;
  font-family: "DejaVu Sans", sans-serif;
  font-size: 11.9px;
`;
const Tile = styled.div`
  position: relative;
  width: 40px;
  height: 40px;
  margin: 4px 4px 0 0;
  border-radius: 4px;
  display: grid;
  place-items: center;
  flex: none;
  background: ${(p) => p.$bg || "transparent"};
  &::after {
    content: "";
    position: absolute;
    bottom: 1px;
    left: calc(50% - ${(p) => (p.$run || 0) / 2}px);
    width: ${(p) => p.$run || 0}px;
    height: 3px;
    border-radius: 2px;
    background: ${(p) => p.$dot || "#9ba0a7"};
  }
`;
const SearchPill = styled.div`
  width: 100px;
  height: 32px;
  margin: 8px 5px 0 1px;
  border-radius: 16px;
  background: #2b323e;
  display: flex;
  align-items: center;
  padding-left: 23px;
  gap: 5px;
  font-size: 11.5px;
  flex: none;
`;
const Tray = styled.div`
  margin-left: auto;
  padding-right: 20px;
  display: flex;
  align-items: center;
`;
const TrayItem = styled.div`
  width: ${(p) => p.$w}px;
  display: flex;
  font-size: 11px;
`;
const Clock = styled.div`
  width: 69px;
  margin-right: 7px;
  display: flex;
  flex-direction: column;
  align-items: flex-end;
  font-size: 11.5px;
  line-height: 16px;
`;
const Count = styled.div`
  width: 16px;
  height: 16px;
  border-radius: 50%;
  background: #c4c3c0;
  color: #222;
  font-size: 10.5px;
  line-height: 16px;
  text-align: center;
`;

function WindowsBar() {
  return (
    <Taskbar>
      <Weather>
        <svg width="23" height="24" viewBox="0 0 23 24"><defs><linearGradient id="moon" x1="0" y1="1" x2=".6" y2="0"><stop offset="0" stopColor="#f0801e" /><stop offset="1" stopColor="#f9c744" /></linearGradient></defs><path d="M15 .8a12 12 0 0 1-15 14.700A11.500 11.500 0 1 0 15 .8z" fill="url(#moon)" /></svg>
        <WeatherText>
          <Fit w={26}>20°C</Fit>
          <WeatherState>سماء صافية</WeatherState>
        </WeatherText>
      </Weather>
      <Tile><svg width="24" height="24" viewBox="0 -1 24 24"><defs><linearGradient id="win" x1="0" y1="0" x2="1" y2="1"><stop offset="0" stopColor="#84dcff" /><stop offset="1" stopColor="#0796f5" /></linearGradient></defs><path d="M0 0h11v11H0zM12 0h11v11H12zM0 12h11v11H0zM12 12h11v11H12z" fill="url(#win)" /></svg></Tile>
      <SearchPill>
        <svg width="14" height="14" viewBox="0 0 14 14" fill="none" stroke="#fff" strokeWidth="1.500"><circle cx="8.300" cy="5.500" r="4.700" /><path d="M4.800 9L.6 13.300" /></svg>
        <Fit w={36}>Search</Fit>
      </SearchPill>
      <Tile><svg width="24" height="22" viewBox="0 0 24 22"><rect x="6" y="0" width="18" height="16" fill="#f4f4f4" /><rect x="0" y="6" width="18" height="16" fill="#5c5c5c" /><rect x="6" y="6" width="12" height="10" fill="#c5c5c5" /></svg></Tile>
      <Tile><svg width="24" height="24" viewBox="0 -1 24 24"><defs><linearGradient id="chat" x1="0" y1="0" x2="1" y2="1"><stop offset="0" stopColor="#8f8bc8" /><stop offset=".5" stopColor="#6b5bd0" /><stop offset="1" stopColor="#5a4ac0" /></linearGradient></defs><path d="M11.500 0a11.500 11.500 0 1 1-5 21.900L1 22.800 1.800 17.500A11.500 11.500 0 0 1 11.500 0z" fill="url(#chat)" /><rect x="5" y="6.500" width="9.500" height="9.500" rx="1.500" fill="#fff" /><path d="M15.300 9.500l3-2v7.500l-3-2z" fill="#fff" /></svg></Tile>
      <Tile $run={6}><svg width="24" height="22" viewBox="0 0 24 22"><path d="M0 1.500Q0 0 1.500 0h6L10 2.500V7H0z" fill="#d99a14" /><path d="M0 6l8-2.500h14q2 0 2 2V20q0 1.500-1.500 1.500h-21Q0 21.500 0 20z" fill="#fcca3e" /><path d="M4 21.500V17q0-2.500 2.500-2.500h11Q20 14.500 20 17v4.500z" fill="#1074c4" /><path d="M8 18h8v1.500H8z" fill="#0b528f" /></svg></Tile>
      <Tile><svg width="24" height="24" viewBox="0 0 24 24"><defs><linearGradient id="eg" x1="0" y1=".3" x2="1" y2=".4"><stop offset="0" stopColor="#1d9fe8" /><stop offset=".55" stopColor="#2fc3d8" /><stop offset="1" stopColor="#5fdd55" /></linearGradient><linearGradient id="eb" x1="0" y1="0" x2="1" y2="1"><stop offset="0" stopColor="#1b8fe0" /><stop offset="1" stopColor="#0a4e9b" /></linearGradient></defs><path d="M0 12C0 5 5.500 0 12 0c7 0 12 4.500 12 10 0 4-3 6-6.500 6-2.500 0-4-1-3.500-2 .3-.8 1-1.200 1-2.500 0-2-2-4-5.500-4C4 7.500 1 10 0 12z" fill="url(#eg)" /><path d="M0 12c.8-3 4-4.800 8-4.800 2 0 4 .8 5 1.800-3 0-5 2.500-5 5.500 0 4 3.500 7.500 8 7.500 2.500 0 4-.8 5.500-1.800C19.500 22.800 16 24 12 24 5 24 0 18.500 0 12z" fill="url(#eb)" /><path d="M8 14c0 5 4 8.500 9 8 2.500-.5 4.300-2.200 5-3.400-5.500 2.400-10 0-10-4.500 0-1.600.6-3 1.400-4C10.500 9.500 8 11 8 14z" fill="#0c3f78" /></svg></Tile>
      <Tile><svg width="24" height="24" viewBox="0 0 24 24"><path d="M6 6V2.500Q6 1 7.500 1h8Q17 1 17 2.500V6" fill="none" stroke="#29b6ef" strokeWidth="1.800" /><path d="M0 5h23v15.500q0 3-3 3H3q-3 0-3-3z" fill="#f5f5f5" /><path d="M7 10h4v4H7z" fill="#f25022" /><path d="M12 10h4v4h-4z" fill="#7fba00" /><path d="M7 15h4v4H7z" fill="#00a4ef" /><path d="M12 15h4v4h-4z" fill="#ffb900" /></svg></Tile>
      <Tile $bg="#283545" $run={16} $dot="#c1bdc0"><svg width="24" height="24" viewBox="0 0 24 24"><circle cx="12" cy="12" r="12" fill="#fbc116" /><path d="M12 12L1.600 6A12 12 0 0 0 11 24l5.500-9.500z" fill="#2c9f48" /><path d="M1.600 6a12 12 0 0 1 20.800 0H12L7 15z" fill="#e33b2e" /><circle cx="12" cy="12" r="5.900" fill="#fff" /><circle cx="12" cy="12" r="4.600" fill="#3c7de8" /></svg></Tile>
      <Tile $bg="#442829" $run={6} $dot="#fb99a2"><svg width="20" height="21" viewBox="0 0 20 21"><path d="M0 0h12v18H0z" fill="#efc368" /><path d="M0 0l4 2v19l-4-2.500z" fill="#fbe09a" /><path d="M9.500 19a3 3 0 0 1-.8-5.800 4 4 0 0 1 7-1.200 3.500 3.500 0 0 1 .8 7z" fill="#1583d8" /></svg></Tile>
      <Tray>
        <TrayItem $w={22}><svg width="12" height="8" viewBox="0 0 12 8" fill="none" stroke="#fff" strokeWidth="1.300"><path d="M.6 7L6 1.500 11.400 7" /></svg></TrayItem>
        <TrayItem $w={24}><svg width="16" height="11" viewBox="0 0 16 11"><path d="M3.500 9a3.500 3.500 0 0 1 .5-6 4.500 4.500 0 0 1 8.500 1L8 8z" fill="#a8adb3" /><path d="M3.500 11a3.200 3.200 0 0 1-.5-6c2-.7 3.500 0 4.500.8C9 4 12 3.500 13 5.500a2.800 2.800 0 0 1 0 5.500z" fill="#f5f5f5" /></svg></TrayItem>
        <TrayItem $w={30}><svg width="17" height="17" viewBox="0 0 17 17" fill="none" stroke="#fff" strokeWidth="1.200"><path d="M1 7A7 7 0 0 1 14.500 5M15 .8V5.300h-4.500M6 15.500A7 7 0 0 1 1.500 11.500M1 16v-4.500h4.500" /><circle cx="12.500" cy="12.500" r="4" fill="#0a78dc" stroke="none" /></svg></TrayItem>
        <TrayItem $w={42}><Fit w={24}>ENG</Fit></TrayItem>
        <TrayItem $w={24}><svg width="16" height="13" viewBox="0 0 16 13" fill="none" stroke="#fff" strokeWidth="1.300"><path d="M.7 4.700a10.400 10.400 0 0 1 14.600 0M3 7.200a7 7 0 0 1 10 0M5.300 9.500a3.900 3.900 0 0 1 5.400 0" /><circle cx="8" cy="11.400" r="1.300" fill="#fff" stroke="none" /></svg></TrayItem>
        <TrayItem $w={24}><svg width="16" height="14" viewBox="0 0 16 14" fill="none" stroke="#fff" strokeWidth="1.100"><path d="M.7 4.700h2.500L7 1.200v11.600L3.200 9.300H.7zM9 4.700a3.500 3.500 0 0 1 0 4.600" /><path d="M11 2.800a6 6 0 0 1 0 8.400M13 1a9 9 0 0 1 0 12" stroke="#6b7880" /></svg></TrayItem>
        <TrayItem $w={16}><svg width="16" height="13" viewBox="0 0 16 13" fill="none" stroke="#fff" strokeWidth="1.200"><path d="M6 3h6.500q1.500 0 1.500 1.500v5q0 1.500-1.500 1.500H5q-1.500 0-1.500-1.500V7" /><path d="M7 5h5.500v4H5.500V7zM14 5.500h1.500v3H14zM0 2.500h5.500V5L4 7H1.500L0 5z" fill="#fff" stroke="none" /><path d="M1.500 0v3M4 0v3" /></svg></TrayItem>
        <Clock><Fit w={43}>5:55 PM</Fit><Fit w={54.5}>1/26/2023</Fit></Clock>
        <Count>5</Count>
      </Tray>
    </Taskbar>
  );
}

export default function App() {
  return (
    <Page>
      <Global />
      <Browser />
      <EditorHeader />
      <ToolBar />
      <Workspace>
        <ShapePanel />
        <Editor />
      </Workspace>
      <WindowsBar />
    </Page>
  );
}
